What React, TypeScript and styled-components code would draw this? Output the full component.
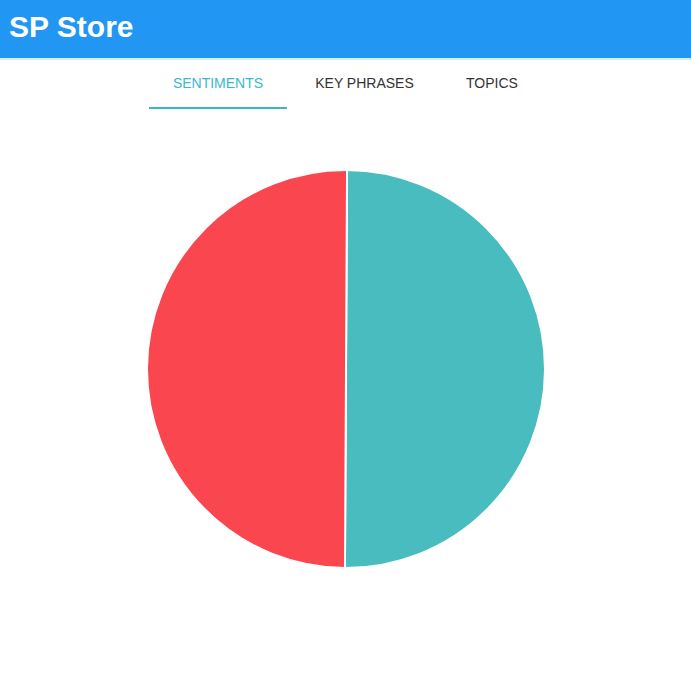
import { useState } from "react";
import styled, { createGlobalStyle } from "styled-components";

const GlobalStyle = createGlobalStyle`
  body {
    margin: 0;
    background: #ffffff;
    font-family: "Liberation Sans", Arial, sans-serif;
  }
`;

const Page = styled.div`
  width: 691px;
  min-height: 679px;
  display: flex;
  flex-direction: column;
`;

const Header = styled.header`
  height: 58px;
  background-color: #2196f3;
  display: flex;
  align-items: center;
  padding: 0 9px;
  border-bottom: 2px solid #d6eef3;
`;

const Title = styled.h1`
  margin: 0;
  color: #ffffff;
  font-size: 30px;
  font-weight: bold;
  font-family: "Liberation Sans", Arial, sans-serif;
  line-height: 1;
  padding-bottom: 4px;
`;

const TabBar = styled.nav`
  display: flex;
  justify-content: center;
  height: 49px;
`;

const Tab = styled.button<{ $active?: boolean; $width: number }>`
  border: none;
  background: none;
  padding: 0 0 1px;
  width: ${(props) => props.$width}px;
  font-family: "Liberation Sans", Arial, sans-serif;
  font-size: 14px;
  text-transform: uppercase;
  color: ${(props) => (props.$active ? "#3cb6d0" : "#333333")};
  border-bottom: 2px solid ${(props) => (props.$active ? "#3cb6d0" : "transparent")};
  cursor: pointer;
  outline: none;
`;

const ChartWrap = styled.div`
  display: flex;
  justify-content: center;
  padding-top: 60px;
`;

const tabs = [
  { label: "Sentiments", width: 138 },
  { label: "Key Phrases", width: 155 },
  { label: "Topics", width: 100 },
];

function Pie() {
  const r = 199;
  const c = 200;
  return (
    <svg width="400" height="400" viewBox="0 0 400 400">
      <g transform={`rotate(0.3 ${c} ${c})`}>
        <path
          d={`M ${c} ${c} L ${c} ${c - r} A ${r} ${r} 0 0 1 ${c} ${c + r} Z`}
          fill="#48bcbf"
          stroke="#ffffff"
          strokeWidth="2"
        />
        <path
          d={`M ${c} ${c} L ${c} ${c + r} A ${r} ${r} 0 0 1 ${c} ${c - r} Z`}
          fill="#f9464f"
          stroke="#ffffff"
          strokeWidth="2"
        />
      </g>
    </svg>
  );
}

export default function App() {
  const [active, setActive] = useState(0);

  return (
    <Page>
      <GlobalStyle />
      <Header>
        <Title>SP Store</Title>
      </Header>
      <TabBar>
        {tabs.map((t, i) => (
          <Tab key={t.label} $width={t.width} $active={i === active} onClick={() => setActive(i)}>
            {t.label}
          </Tab>
        ))}
      </TabBar>
      <ChartWrap>
        <Pie />
      </ChartWrap>
    </Page>
  );
}
